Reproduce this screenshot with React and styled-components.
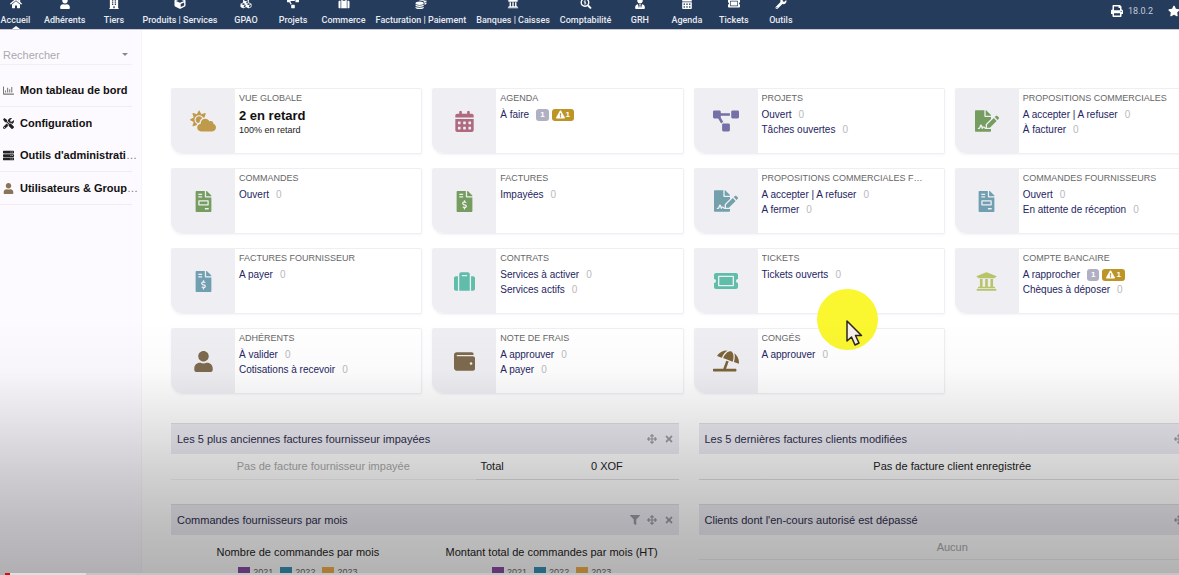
import React from 'react'
import styled, { createGlobalStyle } from 'styled-components'
import {
  FaArrowsAlt, FaBuilding, FaCalendarAlt, FaCloudSun, FaCoins, FaCube, FaCubes,
  FaExclamationTriangle, FaFileInvoice, FaFileInvoiceDollar, FaFileSignature, FaFilter, FaHome,
  FaPrint, FaProjectDiagram, FaRegChartBar, FaSearchDollar, FaServer, FaStar, FaSuitcase,
  FaTicketAlt, FaTimes, FaTools, FaUmbrellaBeach, FaUniversity, FaUser, FaUserTie, FaWallet, FaWrench
} from 'react-icons/fa'

const GlobalStyle = createGlobalStyle`
  * {
    box-sizing: border-box;
  }
  body {
    margin: 0;
    overflow: hidden;
    background: #fff;
    font-family: 'Liberation Sans', Arial, sans-serif;
    font-size: 10px;
    color: #222;
  }
  a {
    color: inherit;
    text-decoration: none;
  }
`
const Wrapper = styled.div`
  position: relative;
  height: 100vh;
  overflow: hidden;
`
// the dashboard is a little wider than the window and is cut at the right
const Page = styled.div`
  display: flex;
  flex-direction: column;
  width: calc(100% + 48px);
  height: 100%;
`
const Header = styled.header`
  display: flex;
  justify-content: space-between;
  height: 30px;
  flex: none;
  background: #263c5c;
  border-bottom: 1px solid #c9c8d3;
  color: #fff;
  font-family: Roboto, sans-serif;
`
const TopMenu = styled.nav`
  display: flex;
  align-items: flex-end;
  margin-left: -8px;
`
const TopLink = styled.a`
  position: relative;
  display: flex;
  flex-direction: column;
  align-items: center;
  gap: 5px;
  min-width: 47px;
  padding: 0 5px 3px;
  font-size: 9px;
  line-height: 12px;
  font-weight: 500;
  white-space: nowrap;
  color: #e8ebf2;

  svg {
    width: 12px;
    height: 11px;
    color: #fff;
  }
  &[aria-current]::after {
    content: '';
    position: absolute;
    bottom: 0;
    border: 4px solid transparent;
    border-top: 0;
    border-bottom: 3px solid #fff;
  }
`
const LoginBlock = styled.div`
  display: flex;
  align-items: center;
  gap: 5px;
  height: 22px;
  padding-right: 47px;
  font-size: 9px;
  color: #c3cad8;

  svg {
    width: 12px;
    height: 12px;
    color: #fff;
  }
`
const Version = styled.span`
  margin-right: 10px;
`
const Body = styled.div`
  display: flex;
  flex: 1;
`
const Sidebar = styled.aside`
  width: 142px;
  flex: none;
  padding: 15px 9px 0 0;
  background: #fcfaff;
  border-right: 1px solid #f6f4f9;
`
const SearchBox = styled.div`
  display: flex;
  align-items: center;
  height: 20px;
  margin-bottom: 9px;
  padding-right: 4px;
  border-bottom: 1px solid #f1eff5;
`
const SearchSelect = styled.select`
  flex: 1;
  padding: 0 3px;
  border: 0;
  background: none;
  appearance: none;
  font: 11px 'Liberation Sans', sans-serif;
  color: #a9a9ad;
`
const Caret = styled.span`
  border: 3px solid transparent;
  border-top: 3px solid #888;
  border-bottom: 0;
`
const LeftMenu = styled.ul`
  margin: 0;
  padding: 0;
  list-style: none;
`
const LeftItem = styled.li`
  box-sizing: content-box;
  display: flex;
  align-items: center;
  gap: 6px;
  height: 32px;
  padding-left: 3px;
  border-bottom: ${props => props.$flat ? 0 : '1px solid #efedf3'};
  font-size: 11px;

  svg {
    width: 11px;
    height: 11px;
    flex: none;
    color: ${props => props.$color};
  }
`
const LeftText = styled.span`
  margin-right: -7px;
  overflow: hidden;
  text-overflow: ellipsis;
  white-space: nowrap;
  color: #777;

  a {
    font-weight: bold;
    color: #111;
  }
`
const Main = styled.main`
  flex: 1;
  padding: 58px 21px 0 29px;
`
const Cards = styled.div`
  display: grid;
  grid-template-columns: repeat(4, 1fr);
  gap: 14px 10px;
  margin-bottom: 29px;
`
const CardBox = styled.section`
  display: flex;
  min-width: 0;
  height: 66px;
  border: 1px solid #efeff3;
  border-left: 0;
  border-radius: 2px 2px 2px 12px;
  box-shadow: 0 1px 3px #f5f3f8;
  overflow: hidden;
`
const CardIcon = styled.div`
  display: flex;
  align-items: center;
  justify-content: center;
  width: 64px;
  flex: none;
  background: #efeef3;
  color: ${props => props.$color};

  svg {
    width: ${props => props.$size || 21}px;
    height: ${props => props.$size || 21}px;
  }
`
const CardContent = styled.div`
  flex: 1;
  min-width: 0;
  padding: 3px 16px 0 4px;
  line-height: 15px;
  white-space: nowrap;
`
const CardTitle = styled.h2`
  margin: 0 0 3px;
  overflow: hidden;
  text-overflow: ellipsis;
  font: 9px/12px 'Liberation Sans', sans-serif;
  color: #666;
`
const CardLine = styled.div`
  display: flex;
  align-items: center;
  color: #25255f;
`
const Count = styled.span`
  margin-left: 7px;
  color: #b9b9bf;
`
const Badge = styled.span`
  display: flex;
  align-items: center;
  gap: 1px;
  height: 12px;
  margin-left: ${props => props.$late ? 3 : 7}px;
  padding: 0 4px;
  border-radius: 3px;
  background: ${props => props.$late ? '#bc9526' : '#b1afc2'};
  color: #fff;
  font-size: 8px;
  font-weight: bold;

  svg {
    width: 9px;
    height: 9px;
  }
`
const Late = styled.strong`
  display: block;
  font-size: 13px;
  line-height: 17px;
  color: #111;
`
const LateRate = styled.small`
  display: block;
  font-size: 9px;
  line-height: 12px;
`
const Boxes = styled.div`
  display: grid;
  grid-template-columns: 1fr 1fr;
  gap: 24px 20px;
`
const BoxHead = styled.header`
  display: flex;
  align-items: center;
  justify-content: space-between;
  height: 31px;
  padding: 0 5px 0 6px;
  background: #ecebf2;
  border-top: 1px solid #dddce2;
`
const BoxTitle = styled.h3`
  margin: 0;
  font-size: 11px;
  font-weight: normal;
  color: #2d2d4d;
`
const Actions = styled.div`
  display: flex;
  gap: 7px;
`
const IconButton = styled.button`
  display: flex;
  padding: 0;
  border: 0;
  background: none;
  color: #9b9aa3;

  svg {
    width: 10px;
    height: 10px;
  }
`
const Table = styled.table`
  width: 100%;
  table-layout: fixed;
  border-collapse: collapse;
  font-size: 11px;
`
const Cell = styled.td`
  width: ${props => props.$width || 'auto'};
  height: 25px;
  padding: 0 5px;
  border-bottom: 1px solid ${props => props.$soft ? '#f0f0f1' : '#dedde2'};
  text-align: ${props => props.$align || 'center'};
  color: ${props => props.$soft ? '#a8a8a8' : '#222'};
`
const Charts = styled.div`
  display: grid;
  grid-template-columns: 1fr 1fr;
  padding-top: 10px;
  text-align: center;
`
const ChartTitle = styled.div`
  font-size: 11px;
  line-height: 14px;
`
const Legend = styled.div`
  display: flex;
  justify-content: center;
  gap: 7px;
  margin-top: 7px;
  line-height: 12px;
  font-size: 9px;
  color: #666;
`
const LegendItem = styled.span`
  display: flex;
  align-items: center;
  gap: 3px;

  &::before {
    content: '';
    width: 12px;
    height: 9px;
    background: ${props => props.$color};
  }
`
const Shade = styled.div`
  position: absolute;
  left: 0;
  right: 0;
  bottom: 0;
  height: 255px;
  pointer-events: none;
  background: linear-gradient(rgba(0, 0, 0, 0), rgba(0, 0, 0, 0.02) 20%, rgba(0, 0, 0, 0.09) 38%, rgba(0, 0, 0, 0.18) 60%, rgba(0, 0, 0, 0.25) 80%, rgba(0, 0, 0, 0.3));
`
const Progress = styled.div`
  position: absolute;
  left: 5px;
  right: 0;
  bottom: 0;
  display: flex;
  height: 2px;
  background: #c4c3c5;
`
const Played = styled.div`
  width: 5px;
  background: #d30f0f;
`
const Loaded = styled.div`
  width: 76px;
  background: #e0dfe1;
`
const Pointer = styled.div`
  position: absolute;
  left: 817px;
  top: 289px;
  width: 61px;
  height: 61px;
  border-radius: 50%;
  background: #faf62f;

  svg {
    position: absolute;
    left: 28px;
    top: 30px;
  }
`

const topMenu = [
  ['Accueil', FaHome],
  ['Adhérents', FaUser],
  ['Tiers', FaBuilding],
  ['Produits | Services', FaCube],
  ['GPAO', FaCubes],
  ['Projets', FaProjectDiagram],
  ['Commerce', FaSuitcase],
  ['Facturation | Paiement', FaCoins],
  ['Banques | Caisses', FaUniversity],
  ['Comptabilité', FaSearchDollar],
  ['GRH', FaUserTie],
  ['Agenda', FaCalendarAlt],
  ['Tickets', FaTicketAlt],
  ['Outils', FaWrench]
]

const leftMenu = [
  { label: 'Mon tableau de bord', icon: FaRegChartBar, color: '#777' },
  { label: 'Configuration', icon: FaTools, color: '#222', flat: true },
  { label: 'Outils d\'administration', icon: FaServer, color: '#222' },
  { label: 'Utilisateurs & Groupes', icon: FaUser, color: '#8a7458' }
]

const cards = [
  { title: 'VUE GLOBALE', icon: FaCloudSun, color: '#bf9a4b', size: 26 },
  { title: 'AGENDA', icon: FaCalendarAlt, color: '#b06a80', lines: [['À faire', 1]] },
  { title: 'PROJETS', icon: FaProjectDiagram, color: '#7570a5', size: 26, lines: [['Ouvert'], ['Tâches ouvertes']] },
  { title: 'PROPOSITIONS COMMERCIALES', icon: FaFileSignature, color: '#759d5f', size: 24, lines: [['A accepter | A refuser'], ['À facturer']] },
  { title: 'COMMANDES', icon: FaFileInvoice, color: '#759d5f', lines: [['Ouvert']] },
  { title: 'FACTURES', icon: FaFileInvoiceDollar, color: '#759d5f', lines: [['Impayées']] },
  { title: 'PROPOSITIONS COMMERCIALES FOURNISSEURS', icon: FaFileSignature, color: '#72a0ab', size: 24, lines: [['A accepter | A refuser'], ['A fermer']] },
  { title: 'COMMANDES FOURNISSEURS', icon: FaFileInvoice, color: '#6f9fb0', lines: [['Ouvert'], ['En attente de réception']] },
  { title: 'FACTURES FOURNISSEUR', icon: FaFileInvoiceDollar, color: '#6f9fb0', lines: [['A payer']] },
  { title: 'CONTRATS', icon: FaSuitcase, color: '#5fbdaa', lines: [['Services à activer'], ['Services actifs']] },
  { title: 'TICKETS', icon: FaTicketAlt, color: '#5fbdaa', size: 24, lines: [['Tickets ouverts']] },
  { title: 'COMPTE BANCAIRE', icon: FaUniversity, color: '#b8c46a', lines: [['A rapprocher', 1], ['Chèques à déposer']] },
  { title: 'ADHÉRENTS', icon: FaUser, color: '#7d6a4e', lines: [['À valider'], ['Cotisations à recevoir']] },
  { title: 'NOTE DE FRAIS', icon: FaWallet, color: '#7d6a4e', lines: [['A approuver'], ['A payer']] },
  { title: 'CONGÉS', icon: FaUmbrellaBeach, color: '#7d6338', size: 26, lines: [['A approuver']] }
]

const legend = [['2021', '#8a4fa3'], ['2022', '#3a93b8'], ['2023', '#f2b14c']]

const Card = ({ title, icon: Icon, color, size, lines }) => (
  <CardBox>
    <CardIcon $color={color} $size={size}><Icon /></CardIcon>
    <CardContent>
      <CardTitle>{title}</CardTitle>
      {lines ? lines.map(([label, late]) => (
        <CardLine key={label}>
          <a href='#'>{label}</a>
          {late
            ? <><Badge>{late}</Badge><Badge $late><FaExclamationTriangle />{late}</Badge></>
            : <Count>0</Count>}
        </CardLine>
      )) : (
        <>
          <Late>2 en retard</Late>
          <LateRate>100% en retard</LateRate>
        </>
      )}
    </CardContent>
  </CardBox>
)

const Box = ({ title, filter, children }) => (
  <section>
    <BoxHead>
      <BoxTitle>{title}</BoxTitle>
      <Actions>
        {filter && <IconButton aria-label='Filtrer'><FaFilter /></IconButton>}
        <IconButton aria-label='Déplacer'><FaArrowsAlt /></IconButton>
        <IconButton aria-label='Fermer'><FaTimes /></IconButton>
      </Actions>
    </BoxHead>
    {children}
  </section>
)

const Chart = ({ title }) => (
  <div>
    <ChartTitle>{title}</ChartTitle>
    <Legend>
      {legend.map(([year, color]) => <LegendItem key={year} $color={color}>{year}</LegendItem>)}
    </Legend>
  </div>
)

const App = () => (
  <Wrapper>
    <GlobalStyle />
    <Page>
      <Header>
        <TopMenu>
          {topMenu.map(([label, Icon], i) => (
            <TopLink href='#' key={label} aria-current={i === 0 ? 'page' : undefined}><Icon />{label}</TopLink>
          ))}
        </TopMenu>
        <LoginBlock>
          <FaPrint />
          <Version>18.0.2</Version>
          <FaStar />
        </LoginBlock>
      </Header>
      <Body>
        <Sidebar>
          <SearchBox>
            <SearchSelect aria-label='Rechercher'><option>Rechercher</option></SearchSelect>
            <Caret />
          </SearchBox>
          <LeftMenu>
            {leftMenu.map(({ label, icon: Icon, color, flat }) => (
              <LeftItem key={label} $color={color} $flat={flat}>
                <Icon />
                <LeftText><a href='#'>{label}</a></LeftText>
              </LeftItem>
            ))}
          </LeftMenu>
        </Sidebar>
        <Main>
          <Cards>
            {cards.map(card => <Card key={card.title} {...card} />)}
          </Cards>
          <Boxes>
            <Box title='Les 5 plus anciennes factures fournisseur impayées'>
              <Table>
                <tbody>
                  <tr>
                    <Cell $soft $width='60%'>Pas de facture fournisseur impayée</Cell>
                    <Cell $align='left'>Total</Cell>
                    <Cell $align='right'>0 XOF</Cell>
                    <Cell $width='10%' />
                  </tr>
                </tbody>
              </Table>
            </Box>
            <Box title='Les 5 dernières factures clients modifiées'>
              <Table>
                <tbody>
                  <tr><Cell>Pas de facture client enregistrée</Cell></tr>
                </tbody>
              </Table>
            </Box>
            <Box title='Commandes fournisseurs par mois' filter>
              <Charts>
                <Chart title='Nombre de commandes par mois' />
                <Chart title='Montant total de commandes par mois (HT)' />
              </Charts>
            </Box>
            <Box title="Clients dont l'en-cours autorisé est dépassé">
              <Table>
                <tbody>
                  <tr><Cell $soft>Aucun</Cell></tr>
                </tbody>
              </Table>
            </Box>
          </Boxes>
        </Main>
      </Body>
    </Page>
    <Pointer>
      <svg width='18' height='28' viewBox='0 0 18 28'>
        <path d='M2 2v20l4.500-4 3.500 8 4-2-3.500-7.500h6z' fill='#f6efec' stroke='#2b2420' strokeWidth='1.500' strokeLinejoin='round' />
      </svg>
    </Pointer>
    <Shade />
    <Progress>
      <Played />
      <Loaded />
    </Progress>
  </Wrapper>
)

export default App
